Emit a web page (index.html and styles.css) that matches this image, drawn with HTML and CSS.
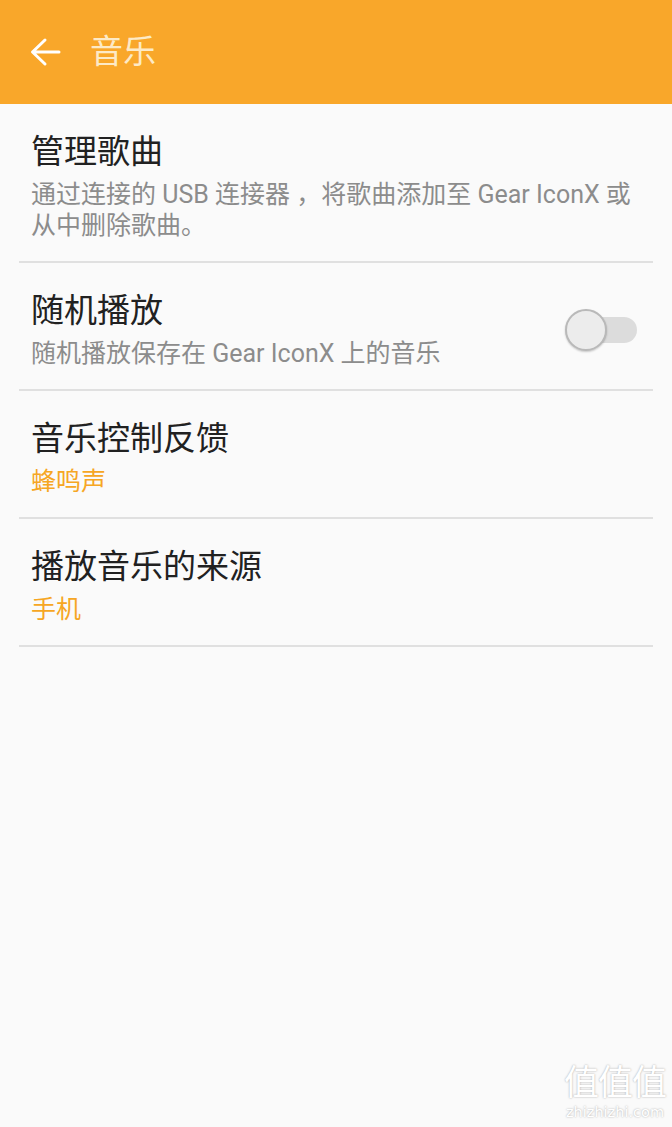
FILE: index.html
```html
<!DOCTYPE html>
<html lang="zh-CN">
<head>
  <meta charset="UTF-8" />
  <meta name="viewport" content="width=device-width, initial-scale=1.0"/>
  <title>音乐</title>
  <link rel="stylesheet" href="styles.css">
</head>
<body>
  <div class="appbar">
    <button class="back" aria-label="返回">
      <svg width="32" height="32" viewBox="0 0 32 32">
        <path d="M30 16H4M16 4L3.5 16L16 28" fill="none" stroke="#fff" stroke-width="3" stroke-linecap="round" stroke-linejoin="round"/>
      </svg>
    </button>
    <div class="appbar-title">音乐</div>
  </div>

  <div class="list">
    <div class="item">
      <div class="item-text">
        <div class="item-title">管理歌曲</div>
        <div class="item-sub">通过连接的 USB 连接器 ，将歌曲添加至 Gear IconX 或<br>从中删除歌曲。</div>
      </div>
    </div>

    <div class="item">
      <div class="item-text">
        <div class="item-title">随机播放</div>
        <div class="item-sub">随机播放保存在 Gear IconX 上的音乐</div>
      </div>
      <div class="switch">
        <div class="switch-track"></div>
        <div class="switch-thumb"></div>
      </div>
    </div>

    <div class="item">
      <div class="item-text">
        <div class="item-title">音乐控制反馈</div>
        <div class="item-sub accent">蜂鸣声</div>
      </div>
    </div>

    <div class="item">
      <div class="item-text">
        <div class="item-title">播放音乐的来源</div>
        <div class="item-sub accent">手机</div>
      </div>
    </div>
  </div>

  <div class="watermark">
    <div class="wm-big">值值值</div>
    <div class="wm-small">zhizhizhi.com</div>
  </div>
</body>
</html>
```

FILE: styles.css
```css
html, body {
  margin: 0;
  height: 100%;
}
body {
  font-family: Roboto, "Noto Sans CJK SC", sans-serif;
  background: #fafafa;
  color: #222;
  position: relative;
  overflow: hidden;
}
.appbar {
  height: 104px;
  background: #f9a72a;
  display: flex;
  align-items: center;
  padding-left: 29px;
  gap: 29px;
}
.back {
  background: none;
  border: none;
  padding: 0;
  width: 32px;
  height: 32px;
  display: flex;
}
.appbar-title {
  font-size: 33px;
  color: #fdeac6;
  line-height: 40px;
}
.list {
  margin: 0 19px;
}
.item {
  display: flex;
  align-items: center;
  padding: 28px 16px 20px 12px;
  border-bottom: 2px solid #e0e0e0;
}
.item-text {
  flex: 1;
}
.item-title {
  font-size: 33px;
  line-height: 40px;
  color: #212121;
}
.item-sub {
  font-size: 25px;
  line-height: 31px;
  margin-top: 7px;
  color: #8c8c8c;
}
.accent {
  color: #f6a623;
}
.switch {
  position: relative;
  width: 72px;
  height: 42px;
}
.switch-track {
  position: absolute;
  left: 12px;
  right: 0;
  top: 8px;
  height: 26px;
  border-radius: 13px;
  background: #dcdcdc;
}
.switch-thumb {
  position: absolute;
  left: 0;
  top: 0;
  width: 38px;
  height: 38px;
  border-radius: 50%;
  background: #ececec;
  border: 2px solid #b9b9b9;
  box-shadow: 0 1px 2px rgba(0,0,0,0.2);
}
.watermark {
  position: absolute;
  right: 6px;
  bottom: 6px;
  text-align: center;
  color: #fff;
  text-shadow: 0 0 2px rgba(0,0,0,0.35);
}
.wm-big {
  font-size: 35px;
  line-height: 38px;
  letter-spacing: -1px;
}
.wm-small {
  font-family: "DejaVu Sans", sans-serif;
  font-size: 14.5px;
  line-height: 18px;
}
```
